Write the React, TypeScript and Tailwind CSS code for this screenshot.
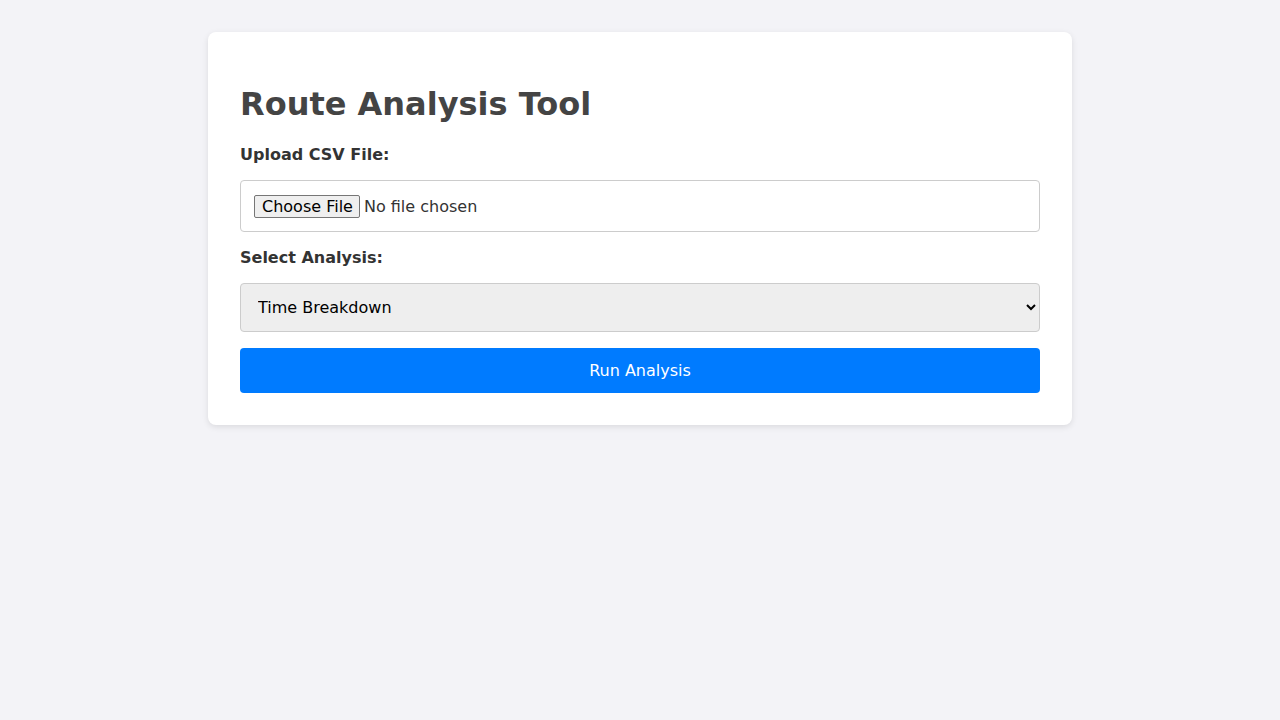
export default function App() {
  return (
    <div className="min-h-[720px] bg-[#f3f3f7] pt-8 font-['DejaVu_Sans',sans-serif]">
      <main className="mx-auto w-[864px] rounded-lg bg-white p-8 shadow-[0_2px_6px_rgba(0,0,0,0.1)]">
        <h1 className="mt-[21px] mb-[22px] text-[32px] font-bold leading-[38px] text-[#444]">Route Analysis Tool</h1>
        <label htmlFor="csv" className="block text-base font-bold leading-[19px] text-[#333]">
          Upload CSV File:
        </label>
        <input
          id="csv"
          type="file"
          className="mt-4 block h-[52px] w-full rounded border border-[#ccc] pt-[13px] pb-[11px] pr-3 pl-[13px] text-base leading-[26px] text-[#333] file:mr-1 file:rounded-[2px] file:border file:border-solid file:border-[#767676] file:bg-[#efefef] file:pl-[7px] file:pr-[6px] file:py-[1px] file:leading-[normal] file:text-black"
        />
        <label htmlFor="analysis" className="mt-4 block text-base font-bold leading-[19px] text-[#333]">
          Select Analysis:
        </label>
        <select
          id="analysis"
          defaultValue="time"
          className="mt-4 block h-[49px] w-full rounded border border-[#ccc] bg-[#eee] pr-3 pl-[13px] text-base text-black"
        >
          <option value="time">Time Breakdown</option>
          <option value="distance">Distance Summary</option>
          <option value="stops">Stop Analysis</option>
        </select>
        <button className="mt-4 block h-[45px] w-full rounded bg-[#007bff] text-base text-white">
          Run Analysis
        </button>
      </main>
    </div>
  )
}
